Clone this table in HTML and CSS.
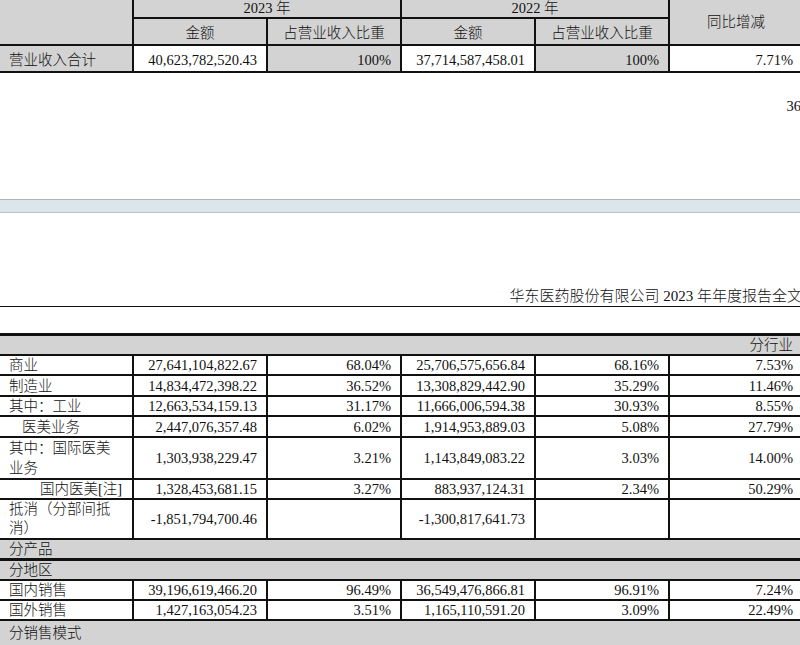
FILE: index.html
```html
<!DOCTYPE html>
<html lang="zh-CN">
<head>
<meta charset="utf-8">
<title>华东医药股份有限公司 2023 年年度报告全文</title>
<link rel="stylesheet" href="styles.css">
</head>
<body>
<main class="viewer">
  <section class="page page-first">
    <table class="grid top">
      <colgroup><col class="c"><col class="c"><col class="c"><col class="c"><col class="c"><col class="c"></colgroup>
      <tr class="h1">
        <td class="fill" rowspan="2"></td>
        <td class="fill center" colspan="2">2023 年</td>
        <td class="fill center" colspan="2">2022 年</td>
        <td class="fill center" rowspan="2">同比增减</td>
      </tr>
      <tr class="h2">
        <td class="fill center">金额</td>
        <td class="fill center">占营业收入比重</td>
        <td class="fill center">金额</td>
        <td class="fill center">占营业收入比重</td>
      </tr>
      <tr class="h2">
        <td class="fill label">营业收入合计</td>
        <td class="num">40,623,782,520.43</td>
        <td class="fill num">100%</td>
        <td class="num">37,714,587,458.01</td>
        <td class="fill num">100%</td>
        <td class="num">7.71%</td>
      </tr>
    </table>
    <div class="pageno">36</div>
  </section>

  <div class="page-gap"></div>

  <section class="page page-second">
    <header class="running-head">华东医药股份有限公司 2023 年年度报告全文</header>
    <table class="grid seg">
      <colgroup><col class="c"><col class="c"><col class="c"><col class="c"><col class="c"><col class="c"></colgroup>
      <tr class="first"><td class="fill right" colspan="6">分行业</td></tr>
      <tr><td class="label">商业</td><td class="num">27,641,104,822.67</td><td class="num">68.04%</td><td class="num">25,706,575,656.84</td><td class="num">68.16%</td><td class="num">7.53%</td></tr>
      <tr class="tall"><td class="label">制造业</td><td class="num">14,834,472,398.22</td><td class="num">36.52%</td><td class="num">13,308,829,442.90</td><td class="num">35.29%</td><td class="num">11.46%</td></tr>
      <tr><td class="label">其中：工业</td><td class="num">12,663,534,159.13</td><td class="num">31.17%</td><td class="num">11,666,006,594.38</td><td class="num">30.93%</td><td class="num">8.55%</td></tr>
      <tr class="tall"><td class="label ind1">医美业务</td><td class="num">2,447,076,357.48</td><td class="num">6.02%</td><td class="num">1,914,953,889.03</td><td class="num">5.08%</td><td class="num">27.79%</td></tr>
      <tr><td class="label two20">其中：国际医美业务</td><td class="num">1,303,938,229.47</td><td class="num">3.21%</td><td class="num">1,143,849,083.22</td><td class="num">3.03%</td><td class="num">14.00%</td></tr>
      <tr><td class="label ind2">国内医美[注]</td><td class="num">1,328,453,681.15</td><td class="num">3.27%</td><td class="num">883,937,124.31</td><td class="num">2.34%</td><td class="num">50.29%</td></tr>
      <tr><td class="label two19">抵消（分部间抵消）</td><td class="num">-1,851,794,700.46</td><td class="num"></td><td class="num">-1,300,817,641.73</td><td class="num"></td><td class="num"></td></tr>
      <tr><td class="fill label" colspan="6">分产品</td></tr>
      <tr class="thick"><td class="fill label" colspan="6">分地区</td></tr>
      <tr><td class="label">国内销售</td><td class="num">39,196,619,466.20</td><td class="num">96.49%</td><td class="num">36,549,476,866.81</td><td class="num">96.91%</td><td class="num">7.24%</td></tr>
      <tr><td class="label">国外销售</td><td class="num">1,427,163,054.23</td><td class="num">3.51%</td><td class="num">1,165,110,591.20</td><td class="num">3.09%</td><td class="num">22.49%</td></tr>
      <tr class="last"><td class="fill label" colspan="6">分销售模式</td></tr>
    </table>
  </section>
</main>
</body>
</html>
```

FILE: styles.css
```css
html, body {
  margin: 0;
  padding: 0;
  overflow: hidden;
  background: #fff;
}

body {
  font-family: "Liberation Serif", "Noto Sans CJK SC", serif;
  font-size: 14.5px;
  font-weight: 300;
  color: #111;
}

.viewer {
  width: 800px;
  height: 645px;
  overflow: hidden;
}

.page {
  width: 804px;
  margin-left: -2px;
  background: #fff;
}

.page-first {
  height: 199px;
  overflow: hidden;
}

.page-gap {
  height: 12px;
  background: #dce5ea;
  border-top: 1px solid #aab5b7;
  border-bottom: 1px solid #b9c4c6;
}

.grid {
  width: 804px;
  table-layout: fixed;
  border-collapse: collapse;
}

.grid .c {
  width: 134px;
}

.grid td {
  border: 2px solid #111;
  padding: 0 9px;
  line-height: 18px;
  vertical-align: middle;
  white-space: normal;
  overflow: hidden;
}

.grid td.fill {
  background: #d3d3d3;
}

.grid td.center {
  text-align: center;
}

.grid td.right,
.grid td.num {
  text-align: right;
}

.grid td.label {
  text-align: left;
}

.grid td.ind1 {
  padding-left: 22px;
}

.grid td.ind2 {
  padding-left: 40px;
}

.grid td.two20 {
  line-height: 20px;
}

.grid td.two19 {
  line-height: 19px;
}

/* top table (end of previous page) */
.top {
  margin-top: -5px;
}

.top .h1 td {
  padding-top: 2px;
}

.top .h2 td {
  padding-top: 5px;
  padding-bottom: 2px;
}

.pageno {
  margin-top: 23px;
  line-height: 20px;
  text-align: right;
  padding-right: 1px;
}

/* second page */
.running-head {
  margin-top: 73px;
  font-size: 15px;
  line-height: 20px;
  text-align: right;
  border-bottom: 1px solid #111;
}

.seg {
  margin-top: 26px;
}

.seg tr.first td,
.seg tr.thick td {
  border-top-width: 3px;
}

.seg tr.tall td {
  padding-top: 1px;
}

.seg tr.last td {
  padding-top: 3px;
  padding-bottom: 6px;
}
```
